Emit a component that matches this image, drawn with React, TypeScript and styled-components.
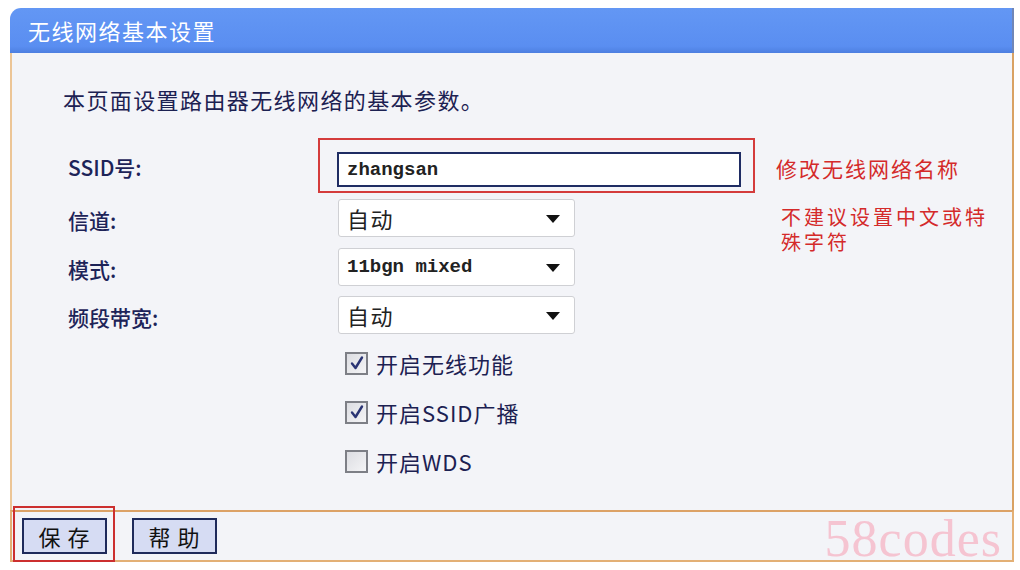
import React from "react";
import styled, { createGlobalStyle } from "styled-components";

const GlobalStyle = createGlobalStyle`
  html, body {
    margin: 0;
    padding: 0;
    background: #ffffff;
  }
  body {
    font-family: "Noto Sans CJK SC", "Noto Sans", sans-serif;
  }
`;

const CJK = `"Noto Sans CJK SC", "Noto Sans", sans-serif`;

const App = () => {
  return (
    <>
      <GlobalStyle />
      <Page>
        <Panel>
          <Header>无线网络基本设置</Header>
          <Body>
            <Intro>本页面设置路由器无线网络的基本参数。</Intro>

            <FieldRow $height={55}>
              <Label>SSID号:</Label>
              <Highlight>
                <TextInput defaultValue="zhangsan" />
              </Highlight>
              <Note>修改无线网络名称</Note>
            </FieldRow>

            <FieldRow $height={38} $top={6}>
              <Label>信道:</Label>
              <Select>
                <SelectText>自动</SelectText>
                <Arrow />
              </Select>
              <Note $indent={26} $start>
                <NoteLine>不建议设置中文或特</NoteLine>
                <NoteLine>殊字符</NoteLine>
              </Note>
            </FieldRow>

            <FieldRow $height={38} $top={11}>
              <Label>模式:</Label>
              <Select>
                <SelectText $mono>11bgn mixed</SelectText>
                <Arrow />
              </Select>
            </FieldRow>

            <FieldRow $height={38} $top={10}>
              <Label>频段带宽:</Label>
              <Select>
                <SelectText>自动</SelectText>
                <Arrow />
              </Select>
            </FieldRow>

            <CheckList>
              <CheckRow>
                <Box $checked>
                  <Tick />
                </Box>
                <CheckText>开启无线功能</CheckText>
              </CheckRow>
              <CheckRow>
                <Box $checked>
                  <Tick />
                </Box>
                <CheckText>开启SSID广播</CheckText>
              </CheckRow>
              <CheckRow>
                <Box />
                <CheckText>开启WDS</CheckText>
              </CheckRow>
            </CheckList>
          </Body>
          <Footer>
            <SaveWrap>
              <Button>保 存</Button>
            </SaveWrap>
            <Button>帮 助</Button>
            <Watermark>58codes</Watermark>
          </Footer>
        </Panel>
      </Page>
    </>
  );
};

const Tick = () => (
  <svg width="16" height="16" viewBox="0 0 16 16">
    <path
      d="M3 8.5 L6.5 13 L13 2.5"
      fill="none"
      stroke="#2a3474"
      strokeWidth="2.4"
      strokeLinecap="round"
      strokeLinejoin="round"
    />
  </svg>
);

export default App;

const Page = styled.div`
  padding: 8px 6px 8px 10px;
`;

const Panel = styled.div`
  width: 1004px;
`;

const Header = styled.div`
  height: 45px;
  box-sizing: border-box;
  background: linear-gradient(180deg, #6397f4 0%, #5a8ef1 85%, #4d7fe0 100%);
  border-radius: 11px 0 0 0;
  border-right: 2px solid #6f86b8;
  color: #ffffff;
  font-family: ${CJK};
  font-size: 22px;
  letter-spacing: 1.5px;
  line-height: 45px;
  padding-left: 18px;
`;

const Body = styled.div`
  height: 457px;
  box-sizing: border-box;
  background: #f3f4f8;
  border-left: 2px solid #ecc596;
  border-right: 2px solid #d9a263;
  padding-top: 33px;
  padding-left: 51px;
`;

const Intro = styled.div`
  font-family: ${CJK};
  font-size: 22px;
  line-height: 26px;
  letter-spacing: 1.4px;
  color: #1c2152;
  margin-bottom: 26px;
`;

const FieldRow = styled.div<{ $height: number; $top?: number }>`
  display: grid;
  grid-template-columns: 255px 437px 1fr;
  grid-template-rows: ${(p) => p.$height}px;
  align-items: center;
  height: ${(p) => p.$height}px;
  margin-top: ${(p) => p.$top ?? 0}px;
  overflow: visible;
`;

const Label = styled.div`
  font-family: ${CJK};
  font-size: 21px;
  font-weight: 500;
  color: #1d2358;
  padding-left: 5px;
  padding-top: 3px;
`;

const Highlight = styled.div`
  height: 55px;
  box-sizing: border-box;
  border: 2px solid #d43c3c;
  padding: 12px 12px 4px 17px;
`;

const TextInput = styled.input`
  display: block;
  width: 404px;
  height: 35px;
  box-sizing: border-box;
  border: 2px solid #1f2c63;
  background: #ffffff;
  padding: 0 0 0 8px;
  font-family: "Liberation Mono", monospace;
  font-size: 19px;
  font-weight: bold;
  color: #222222;
  outline: none;
`;

const Note = styled.div<{ $indent?: number; $start?: boolean }>`
  align-self: ${(p) => (p.$start ? "start" : "center")};
  margin-top: ${(p) => (p.$start ? "5px" : "4px")};
  padding-left: ${(p) => p.$indent ?? 21}px;
  font-family: ${CJK};
  font-size: 21px;
  line-height: 24px;
  letter-spacing: 2px;
  color: #d42a2a;
  white-space: nowrap;
`;

const NoteLine = styled.div`
  font-size: 20px;
  line-height: 25px;
  letter-spacing: 3px;
`;

const Select = styled.div`
  margin-left: 20px;
  width: 237px;
  height: 38px;
  box-sizing: border-box;
  border: 1px solid #cfd0d4;
  border-radius: 3px;
  background: #ffffff;
  display: flex;
  align-items: center;
  justify-content: space-between;
  padding: 0 8px 0 8px;
`;

const SelectText = styled.span<{ $mono?: boolean }>`
  font-family: ${(p) => (p.$mono ? `"Liberation Mono", monospace` : CJK)};
  font-size: ${(p) => (p.$mono ? "19px" : "22px")};
  font-weight: ${(p) => (p.$mono ? "bold" : "normal")};
  color: #222222;
  letter-spacing: ${(p) => (p.$mono ? "0" : "1.5px")};
`;

const Arrow = styled.span`
  width: 0;
  height: 0;
  border-left: 7px solid transparent;
  border-right: 7px solid transparent;
  border-top: 8px solid #111111;
  margin-right: 6px;
  margin-top: 2px;
`;

const CheckList = styled.div`
  margin-top: 9px;
  margin-left: 282px;
  display: flex;
  flex-direction: column;
  gap: 9px;
`;

const CheckRow = styled.div`
  height: 40px;
  display: flex;
  align-items: center;
  gap: 8px;
`;

const Box = styled.span<{ $checked?: boolean }>`
  width: 23px;
  height: 23px;
  box-sizing: border-box;
  border: 2px solid #7d7f86;
  background: linear-gradient(135deg, #dcdde2 0%, #f4f4f6 100%);
  display: flex;
  align-items: center;
  justify-content: center;
`;

const CheckText = styled.span`
  font-family: ${CJK};
  font-size: 22px;
  letter-spacing: 1px;
  color: #1c2152;
`;

const Footer = styled.div`
  height: 52px;
  box-sizing: border-box;
  background: #f3f4f8;
  border: 2px solid #e3b075;
  border-top-color: #dca266;
  display: flex;
  align-items: center;
  gap: 25px;
  padding: 0 10px 0 10px;
`;

const SaveWrap = styled.div`
  position: relative;

  &::after {
    content: "";
    position: absolute;
    top: -12px;
    bottom: -8px;
    left: -9px;
    right: -8px;
    border: 2px solid #cc2f2f;
    pointer-events: none;
  }
`;

const Button = styled.button`
  width: 85px;
  height: 36px;
  box-sizing: border-box;
  border: 2px solid #1f2a5a;
  background: #d6dcf3;
  font-family: ${CJK};
  font-size: 22px;
  color: #111111;
  padding: 0;
  line-height: 32px;
  letter-spacing: 1px;
`;

const Watermark = styled.span`
  margin-left: auto;
  margin-top: 4px;
  font-family: "Liberation Serif", serif;
  font-size: 52px;
  letter-spacing: 1px;
  color: #f5c4d1;
`;
